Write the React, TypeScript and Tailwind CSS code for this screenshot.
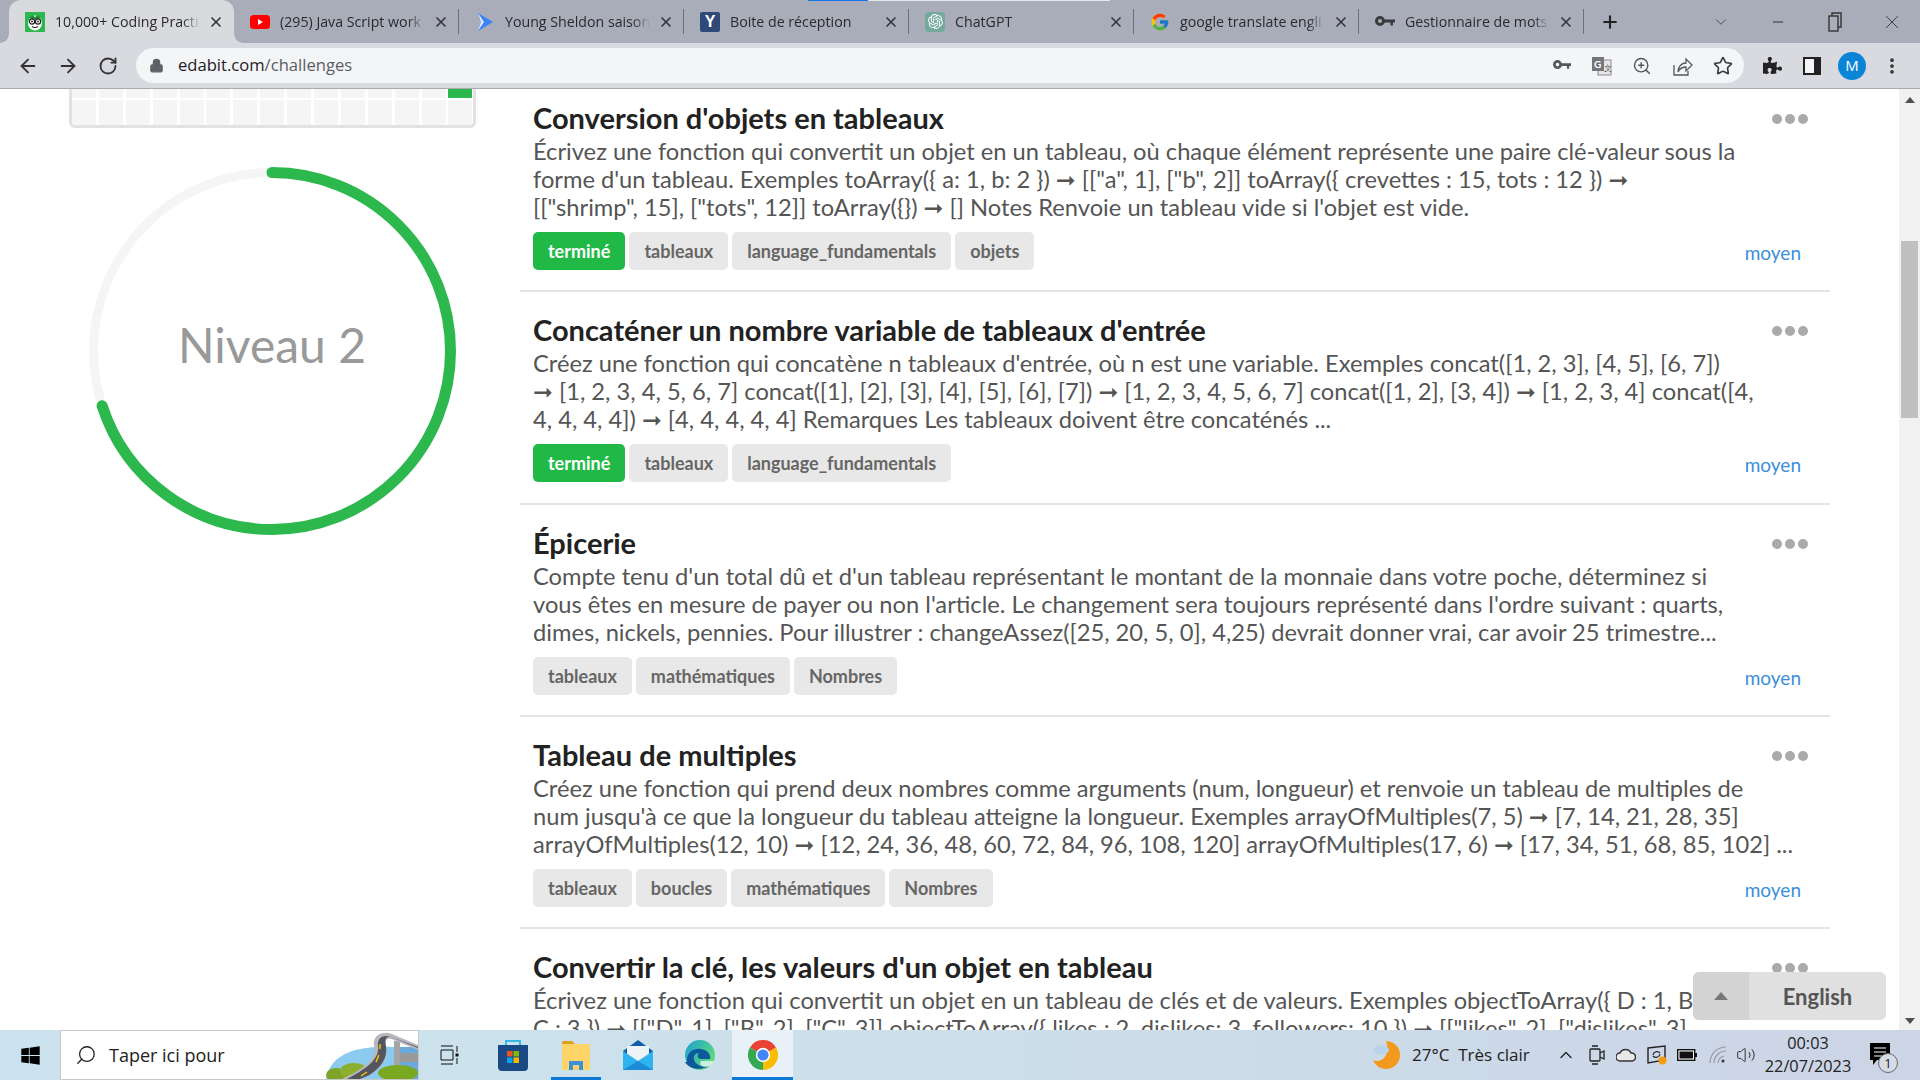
import { ArrowLeft, ArrowRight, RotateCw, Lock, X, Plus, ChevronDown, Minus, ZoomIn, Star, EllipsisVertical, ChevronUp, Search, Volume2 } from "lucide-react";
import { FaPuzzlePiece, FaWindows } from "react-icons/fa";
import { FcGoogle } from "react-icons/fc";
import { SiOpenai } from "react-icons/si";
import type { ReactNode } from "react";

function KeyIcon({ className = "" }: { className?: string }) {
  return (
    <svg viewBox="0 0 20 12" className={className} fill="currentColor">
      <path d="M5 0a5 5 0 1 1-.01 10A5 5 0 0 1 5 0zm0 3a2 2 0 1 0 0 4 2 2 0 0 0 0-4z" />
      <path d="M9 3.5h11v3h-2v3h-2.5v-3H9z" />
    </svg>
  );
}

function EdabitIcon() {
  return (
    <svg viewBox="0 0 20 20" className="w-5 h-5">
      <rect width="20" height="20" fill="#2db84d" />
      <ellipse cx="10" cy="11" rx="7" ry="7.5" fill="#fff" />
      <path d="M4 6l3-3 3 2 3-2 3 3-3 1H7z" fill="#1f8f3a" />
      <circle cx="7" cy="9.5" r="2.6" fill="#fff" stroke="#222" strokeWidth="1.2" />
      <circle cx="13" cy="9.5" r="2.6" fill="#fff" stroke="#222" strokeWidth="1.2" />
      <circle cx="7" cy="9.5" r="0.9" fill="#222" />
      <circle cx="13" cy="9.5" r="0.9" fill="#222" />
      <path d="M7 14.5q3 2 6 0" stroke="#222" strokeWidth="1.1" fill="none" />
    </svg>
  );
}

function YoutubeIcon() {
  return (
    <svg viewBox="0 0 20 14" className="w-5 h-[14px]">
      <rect width="20" height="14" rx="3.5" fill="#f00" />
      <path d="M8 4l5 3-5 3z" fill="#fff" />
    </svg>
  );
}

function PrimeIcon() {
  return (
    <svg viewBox="0 0 20 20" className="w-5 h-5">
      <path d="M3 1l15 9-15 9 3-9z" fill="#3b82f6" />
      <path d="M3 1l6 9-6 9 3-9z" fill="#dbeafe" />
    </svg>
  );
}

function YahooIcon() {
  return (
    <div className="w-5 h-5 bg-[#2f4a78] rounded-[2px] flex items-center justify-center text-white text-[16px] font-bold font-['Liberation_Sans',sans-serif]">
      Y
    </div>
  );
}

function GptIcon() {
  return (
    <div className="w-5 h-5 bg-[#74aa9c] rounded-[4px] flex items-center justify-center text-white">
      <SiOpenai size={15} />
    </div>
  );
}

const tabs: { icon: ReactNode; title: string; active?: boolean; sep?: boolean }[] = [
  { icon: <EdabitIcon />, title: "10,000+ Coding Practi", active: true },
  { icon: <YoutubeIcon />, title: "(295) Java Script work", sep: true },
  { icon: <PrimeIcon />, title: "Young Sheldon saison", sep: true },
  { icon: <YahooIcon />, title: "Boite de réception", sep: true },
  { icon: <GptIcon />, title: "ChatGPT", sep: true },
  { icon: <FcGoogle size={20} />, title: "google translate engli", sep: true },
  { icon: <KeyIcon className="w-5 h-3 text-[#3a3a3a]" />, title: "Gestionnaire de mots", sep: true },
];

function TabStrip() {
  return (
    <div className="relative h-[43px] bg-[#a8adb9] flex items-stretch pl-[9px] text-[#2a2a2e] text-[14.2px] font-['Open_Sans',sans-serif]">
      <div className="absolute top-0 left-[808px] w-[60px] h-[1px] bg-[#1a73e8]" />
      <div className="absolute top-0 left-[868px] w-[242px] h-[1px] bg-[#e4e6ea]" />
      {tabs.map((t) => (
        <div key={t.title} className={`relative w-[225px] flex items-center pl-4 pr-[10px] ${t.active ? "bg-[#d8dade] rounded-t-[12px]" : ""}`}>
          {t.active && (
            <>
              <div className="absolute bottom-0 left-[-9px] w-[9px] h-[9px] bg-[radial-gradient(circle_at_0_0,transparent_8.5px,#d8dade_9px)]" />
              <div className="absolute bottom-0 right-[-9px] w-[9px] h-[9px] bg-[radial-gradient(circle_at_100%_0,transparent_8.5px,#d8dade_9px)]" />
            </>
          )}
          <div className="w-5 h-5 shrink-0 flex items-center justify-center">{t.icon}</div>
          <div className="ml-[10px] flex-1 overflow-hidden whitespace-nowrap [mask-image:linear-gradient(to_right,black_88%,transparent)]">{t.title}</div>
          <X size={16} strokeWidth={2.5} className="shrink-0 ml-2 text-[#33353a]" />
          {t.sep && <div className="absolute right-0 top-[9px] h-[25px] w-[1px] bg-[#6d7078]" />}
        </div>
      ))}
      <div className="flex items-center ml-4">
        <Plus size={20} strokeWidth={2.5} className="text-[#222]" />
      </div>
      <div className="flex-1" />
      <div className="flex items-center text-[#333]">
        <div className="w-[57px] flex justify-center">
          <ChevronDown size={18} strokeWidth={1} />
        </div>
        <div className="w-[57px] flex justify-center">
          <Minus size={16} strokeWidth={1.5} />
        </div>
        <div className="w-[57px] flex justify-center">
          <svg viewBox="0 0 14 20" className="w-[14px] h-[20px]" fill="none" stroke="currentColor" strokeWidth="1.4">
            <rect x="1" y="4" width="9" height="15" />
            <path d="M4 4V1h9v14h-3" />
          </svg>
        </div>
        <div className="w-[57px] flex justify-center">
          <X size={22} strokeWidth={1} />
        </div>
      </div>
    </div>
  );
}

function Toolbar() {
  return (
    <div className="h-[46px] bg-[#d8dae0] border-b border-[#a9aaae] flex items-center pl-[17px] text-[#333]">
      <ArrowLeft size={22} strokeWidth={2} />
      <ArrowRight size={22} strokeWidth={2} className="ml-[18px]" />
      <RotateCw size={20} strokeWidth={2.2} className="ml-[19px]" />
      <div className="ml-[18px] w-[1608px] h-[35px] rounded-full bg-[#f4f5f7] flex items-center pl-[13px] pr-[11px]">
        <Lock size={15} fill="#5f6368" className="text-[#5f6368]" />
        <div className="ml-[14px] text-[16.6px] font-['Open_Sans',sans-serif] text-[#1f2024] flex-1">
          edabit.com<span className="text-[#5a5d63]">/challenges</span>
        </div>
        <KeyIcon className="w-[18px] h-[11px] text-[#55575c]" />
        <svg viewBox="0 0 20 20" className="w-[20px] h-[20px] ml-[21px]">
          <rect x="6" y="4" width="13" height="15" fill="#e5e5e8" stroke="#8a8c90" />
          <rect x="0" y="1" width="12" height="14" fill="#74767b" />
          <text x="2" y="12" fontSize="10" fontWeight="700" fill="#fff">G</text>
          <text x="12" y="15" fontSize="8" fill="#555">文</text>
        </svg>
        <ZoomIn size={20} strokeWidth={1.7} className="ml-[20px] text-[#55575c]" />
        <svg viewBox="0 0 20 20" className="w-[20px] h-[20px] ml-[21px] text-[#55575c]" fill="none" stroke="currentColor" strokeWidth="1.3">
          <path d="M1 9v10h14v-4" />
          <path d="M5 16c0-6 4-9 8-9V3l6 6-6 6v-4c-3 0-6 1-8 5z" />
        </svg>
        <Star size={20} strokeWidth={2} className="ml-[20px] text-[#3d3f44]" />
      </div>
      <FaPuzzlePiece size={19} className="ml-[19px] text-[#222]" />
      <svg viewBox="0 0 18 18" className="w-[18px] h-[18px] ml-[21px]">
        <rect x="1" y="1" width="16" height="16" fill="#f4f5f7" stroke="#222" strokeWidth="2" />
        <rect x="11" y="1" width="6" height="16" fill="#222" />
      </svg>
      <div className="ml-[17px] w-7 h-7 rounded-full bg-[#0a84d6] text-white text-[15px] flex items-center justify-center font-['Open_Sans',sans-serif]">
        M
      </div>
      <EllipsisVertical size={20} strokeWidth={2.5} className="ml-[16px] text-[#333]" />
    </div>
  );
}

function Sidebar() {
  return (
    <aside className="w-[520px] shrink-0 pl-[69px]">
      <div className="w-[407px] h-[39px] border-x-[3px] border-b-[3px] border-[#e2e2e2] rounded-b-[6px] flex flex-col gap-[2px] overflow-hidden">
        <div className="h-[9px] grid grid-cols-[repeat(15,24px)] gap-x-[2.9px]">
          {Array.from({ length: 15 }).map((_, i) => (
            <div key={i} className={i === 14 ? "bg-[#2db84d]" : "bg-[#f5f5f5]"} />
          ))}
        </div>
        <div className="flex-1 grid grid-cols-[repeat(15,24px)] gap-x-[2.9px]">
          {Array.from({ length: 15 }).map((_, i) => (
            <div key={i} className="bg-[#f5f5f5]" />
          ))}
        </div>
      </div>
      <div className="mt-[35px] ml-[15px] relative w-[376px] h-[376px]">
        <svg viewBox="0 0 376 376" className="w-full h-full">
          <circle cx="188" cy="188" r="178.5" fill="none" stroke="#f5f5f5" strokeWidth="9" />
          <circle
            cx="188"
            cy="188"
            r="178.5"
            fill="none"
            stroke="#2db84d"
            strokeWidth="11"
            strokeLinecap="round"
            strokeDasharray={`${2 * Math.PI * 178.5 * 0.7} ${2 * Math.PI * 178.5}`}
            transform="rotate(-90 188 188)"
          />
        </svg>
        <div className="absolute inset-0 flex items-center justify-center pb-[12px] text-[48px] text-[#999] font-['Lato',sans-serif]">Niveau 2</div>
      </div>
    </aside>
  );
}

interface Challenge {
  title: string;
  lines: string[];
  tags: string[];
  done?: boolean;
}

const challenges: Challenge[] = [
  {
    title: "Conversion d'objets en tableaux",
    lines: [
      "Écrivez une fonction qui convertit un objet en un tableau, où chaque élément représente une paire clé-valeur sous la",
      'forme d\'un tableau. Exemples toArray({ a: 1, b: 2 }) ➞ [["a", 1], ["b", 2]] toArray({ crevettes : 15, tots : 12 }) ➞',
      '[["shrimp", 15], ["tots", 12]] toArray({}) ➞ [] Notes Renvoie un tableau vide si l\'objet est vide.',
    ],
    tags: ["tableaux", "language_fundamentals", "objets"],
    done: true,
  },
  {
    title: "Concaténer un nombre variable de tableaux d'entrée",
    lines: [
      "Créez une fonction qui concatène n tableaux d'entrée, où n est une variable. Exemples concat([1, 2, 3], [4, 5], [6, 7])",
      "➞ [1, 2, 3, 4, 5, 6, 7] concat([1], [2], [3], [4], [5], [6], [7]) ➞ [1, 2, 3, 4, 5, 6, 7] concat([1, 2], [3, 4]) ➞ [1, 2, 3, 4] concat([4,",
      "4, 4, 4, 4]) ➞ [4, 4, 4, 4, 4] Remarques Les tableaux doivent être concaténés ...",
    ],
    tags: ["tableaux", "language_fundamentals"],
    done: true,
  },
  {
    title: "Épicerie",
    lines: [
      "Compte tenu d'un total dû et d'un tableau représentant le montant de la monnaie dans votre poche, déterminez si",
      "vous êtes en mesure de payer ou non l'article. Le changement sera toujours représenté dans l'ordre suivant : quarts,",
      "dimes, nickels, pennies. Pour illustrer : changeAssez([25, 20, 5, 0], 4,25) devrait donner vrai, car avoir 25 trimestre...",
    ],
    tags: ["tableaux", "mathématiques", "Nombres"],
  },
  {
    title: "Tableau de multiples",
    lines: [
      "Créez une fonction qui prend deux nombres comme arguments (num, longueur) et renvoie un tableau de multiples de",
      "num jusqu'à ce que la longueur du tableau atteigne la longueur. Exemples arrayOfMultiples(7, 5) ➞ [7, 14, 21, 28, 35]",
      "arrayOfMultiples(12, 10) ➞ [12, 24, 36, 48, 60, 72, 84, 96, 108, 120] arrayOfMultiples(17, 6) ➞ [17, 34, 51, 68, 85, 102] ...",
    ],
    tags: ["tableaux", "boucles", "mathématiques", "Nombres"],
  },
  {
    title: "Convertir la clé, les valeurs d'un objet en tableau",
    lines: [
      "Écrivez une fonction qui convertit un objet en un tableau de clés et de valeurs. Exemples objectToArray({ D : 1, B",
      'C : 3 }) ➞ [["D", 1], ["B", 2], ["C", 3]] objectToArray({ likes : 2, dislikes: 3, followers: 10 }) ➞ [["likes", 2], ["dislikes", 3]',
    ],
    tags: ["tableaux", "objets"],
  },
];

function ChallengeRow({ c }: { c: Challenge }) {
  return (
    <div className="relative h-[212.3px] shrink-0 border-b-2 border-[#e4e4e4] pl-[13px] pt-[21px]">
      <div className="absolute right-[22px] top-[34px] flex gap-[3px]">
        <span className="w-[10px] h-[10px] rounded-full bg-[#aaa]" />
        <span className="w-[10px] h-[10px] rounded-full bg-[#aaa]" />
        <span className="w-[10px] h-[10px] rounded-full bg-[#aaa]" />
      </div>
      <h3 className="text-[29px] leading-[34px] font-bold text-[#222] whitespace-nowrap">{c.title}</h3>
      <div className="mt-[2px] text-[23.7px] leading-[28px] text-[#555] whitespace-nowrap">
        {c.lines.map((l) => (
          <div key={l}>{l}</div>
        ))}
      </div>
      <div className="mt-[11px] flex items-end justify-between pr-[29px]">
        <div className="flex gap-1">
          {c.done && <span className="h-[38px] px-[15px] rounded-[5px] bg-[#20b946] text-white font-bold text-[18px] leading-[38px]">terminé</span>}
          {c.tags.map((t) => (
            <span key={t} className="h-[38px] px-[15px] rounded-[5px] bg-[#e8e8e8] text-[#666] font-bold text-[18px] leading-[38px]">
              {t}
            </span>
          ))}
        </div>
        <span className="text-[19px] leading-[28px] text-[#3b8fdb] mb-[3px]">moyen</span>
      </div>
    </div>
  );
}

function Scrollbar() {
  return (
    <div className="w-[21px] shrink-0 bg-[#f1f1f1] flex flex-col items-center">
      <div className="mt-[8px] w-0 h-0 border-x-[5px] border-x-transparent border-b-[6px] border-b-[#505050]" />
      <div className="mt-[138px] w-[17px] h-[177px] bg-[#c0c0c0]" />
      <div className="flex-1" />
      <div className="mb-[6px] w-0 h-0 border-x-[5px] border-x-transparent border-t-[6px] border-t-[#505050]" />
    </div>
  );
}

function StoreIcon() {
  return (
    <svg viewBox="0 0 30 32" className="w-[30px] h-[32px]">
      <path d="M8 6V2h14v4" fill="none" stroke="#35b8e8" strokeWidth="2" />
      <path d="M0 6h30v22a4 4 0 0 1-4 4H4a4 4 0 0 1-4-4z" fill="#1a4a86" />
      <rect x="9" y="12" width="5.5" height="5.5" fill="#f25022" />
      <rect x="15.5" y="12" width="5.5" height="5.5" fill="#7fba00" />
      <rect x="9" y="18.5" width="5.5" height="5.5" fill="#00a4ef" />
      <rect x="15.5" y="18.5" width="5.5" height="5.5" fill="#ffb900" />
    </svg>
  );
}

function FolderIcon() {
  return (
    <svg viewBox="0 0 28 30" className="w-[28px] h-[30px]">
      <path d="M0 3a2 2 0 0 1 2-2h8l3 3H0z" fill="#e0a10d" />
      <rect x="0" y="4" width="28" height="26" rx="1" fill="#fcd468" />
      <path d="M7 30v-9h14v9h-4v-5h-6v5z" fill="#3d8fd8" />
    </svg>
  );
}

function MailIcon() {
  return (
    <svg viewBox="0 0 30 30" className="w-[30px] h-[30px]">
      <path d="M0 11L15 0l15 11v19H0z" fill="#0f5fa8" />
      <path d="M4 6h22v13l-11 6-11-6z" fill="#eef3f8" />
      <path d="M0 11l15 10 15-10v19H0z" fill="#2fb4ee" />
      <path d="M0 30l15-9 15 9z" fill="#1c8cd6" />
    </svg>
  );
}

function EdgeIcon() {
  return (
    <svg viewBox="0 0 30 30" className="w-[30px] h-[30px]">
      <defs>
        <linearGradient id="edgeA" x1="0" y1="0" x2="1" y2="0.6">
          <stop offset="0" stopColor="#1a9ed8" />
          <stop offset="1" stopColor="#5fdc78" />
        </linearGradient>
      </defs>
      <circle cx="15" cy="15" r="15" fill="url(#edgeA)" />
      <path d="M2 22C1 12 9 8 16 9c7 1 10 6 9 10h-9c-4 0-4-4-2-6-6 0-7 7-2 11 3 3 9 3 13 1-5 5-20 6-25-3z" fill="#0c5a9c" />
      <path d="M16 21h13c-1 2-2 4-4 5-5 2-12 0-9-5z" fill="#cbeee0" />
    </svg>
  );
}

function ChromeIcon() {
  return (
    <svg viewBox="0 0 30 30" className="w-[30px] h-[30px]">
      <path d="M15 15L2 7.5A15 15 0 0 1 28 7.5z" fill="#ea4335" />
      <path d="M15 15L28 7.5A15 15 0 0 1 15 30z" fill="#fbbc04" />
      <path d="M15 15L15 30A15 15 0 0 1 2 7.5z" fill="#34a853" />
      <circle cx="15" cy="15" r="7.2" fill="#fff" />
      <circle cx="15" cy="15" r="5.6" fill="#4285f4" />
    </svg>
  );
}

function HighwayPic() {
  return (
    <svg viewBox="0 0 96 50" className="absolute right-0 bottom-0 w-[96px] h-[50px]">
      <path d="M4 50C8 28 28 16 72 18v32z" fill="#8ccbf0" />
      <rect x="72" y="18" width="24" height="32" fill="#6aa9dc" />
      <rect x="78" y="24" width="18" height="9" fill="#9a9a9a" />
      <rect x="72" y="12" width="6" height="34" fill="#a5a5a5" />
      <ellipse cx="14" cy="46" rx="10" ry="7" fill="#7da52a" />
      <ellipse cx="32" cy="42" rx="14" ry="8" fill="#8cb02e" />
      <ellipse cx="76" cy="44" rx="20" ry="8" fill="#7aa823" />
      <path d="M20 50C46 38 54 28 52 17c-2-10 8-16 18-12l26 11v5L72 11c-7-3-10 0-8 8 2 14-8 25-26 31z" fill="#b8b8c0" />
      <path d="M25 50C48 38 58 28 56 17c-1-9 6-12 13-9l27 11v-1L72 9c-7-3-10 0-8 8 2 14-8 27-26 33z" fill="#55555f" />
      <path d="M39 47l6-4M54 33l3-7M58 20v-5" stroke="#f6c500" strokeWidth="1.5" />
    </svg>
  );
}

function Taskbar() {
  return (
    <div className="h-[50px] shrink-0 bg-[linear-gradient(to_right,#cbe3ee,#cce0ea_45%,#ccd4e6)] flex items-stretch text-[#222] font-['Open_Sans',sans-serif]">
      <div className="w-[60px] flex items-center justify-center">
        <FaWindows size={21} className="text-black" />
      </div>
      <div className="relative w-[359px] bg-white border border-[#c8c8c8] flex items-center pl-[14px] text-[18px] overflow-hidden">
        <Search size={22} strokeWidth={1.4} className="-scale-x-100" />
        <span className="ml-[12px]">Taper ici pour</span>
        <HighwayPic />
      </div>
      <div className="w-[62px] flex items-center justify-center">
        <svg viewBox="0 0 20 20" className="w-[20px] h-[20px]" fill="none" stroke="#111" strokeWidth="1">
          <path d="M1 1h12M1 19h12M1 5h12v10H1z" />
          <path d="M17 1v6M17 13v6" />
          <rect x="15.5" y="8.5" width="3" height="3" fill="#111" stroke="none" />
        </svg>
      </div>
      <div className="w-[64px] flex items-center justify-center"><StoreIcon /></div>
      <div className="relative w-[62px] flex items-center justify-center">
        <FolderIcon />
        <div className="absolute bottom-0 inset-x-[6px] h-[3px] bg-[#0a78d4]" />
      </div>
      <div className="w-[62px] flex items-center justify-center"><MailIcon /></div>
      <div className="w-[62px] flex items-center justify-center"><EdgeIcon /></div>
      <div className="relative w-[61px] ml-[1px] bg-[#e8f1f7] flex items-center justify-center">
        <ChromeIcon />
        <div className="absolute bottom-0 inset-x-0 h-[3px] bg-[#0a78d4]" />
      </div>
      <div className="flex-1" />
      <div className="flex items-center w-[184px] text-[17px]">
        <svg viewBox="0 0 28 28" className="w-[28px] h-[28px] shrink-0">
          <path d="M14 0a14 14 0 1 1-13 19c8 4 18-4 13-19z" fill="#f39a1e" />
          <ellipse cx="9" cy="9" rx="8" ry="4.5" fill="#b8d4ec" />
        </svg>
        <span className="ml-[12px] whitespace-nowrap">27°C&nbsp; Très clair</span>
      </div>
      <div className="flex items-center text-[#222]">
        <ChevronUp size={20} strokeWidth={1.6} />
        <svg viewBox="0 0 16 20" className="ml-[13px] w-[16px] h-[20px]" fill="none" stroke="#222" strokeWidth="1.3">
          <rect x="1" y="4" width="10" height="12" rx="1" />
          <path d="M11 8l4-2v8l-4-2M3 1h6M3 19h6" />
        </svg>
        <svg viewBox="0 0 20 14" className="ml-[11px] w-[20px] h-[14px]">
          <path d="M4 13a4 4 0 0 1 0-8 6 6 0 0 1 11 0 4 4 0 0 1 1 8z" fill="#e8e8e8" stroke="#333" strokeWidth="1.5" />
        </svg>
        <svg viewBox="0 0 20 20" className="ml-[11px] w-[20px] h-[20px]">
          <path d="M1 3l17-2v14l-17 3z" fill="none" stroke="#222" strokeWidth="1.4" />
          <path d="M6 10a4 4 0 0 1 7-2M13 9a4 4 0 0 1-7 2" fill="none" stroke="#222" strokeWidth="1.2" />
          <circle cx="15.5" cy="15.5" r="4" fill="#f79a10" />
        </svg>
        <svg viewBox="0 0 20 12" className="ml-[10px] w-[20px] h-[12px]">
          <rect x="0.7" y="0.7" width="17" height="10.6" fill="#fff" stroke="#111" strokeWidth="1.4" />
          <rect x="2.5" y="2.5" width="13.5" height="7" fill="#111" />
          <rect x="18" y="4" width="2" height="4" fill="#111" />
        </svg>
        <svg viewBox="0 0 18 18" className="ml-[12px] w-[18px] h-[18px]" fill="none" stroke="#9a9a9a" strokeWidth="1.2">
          <path d="M1 17A16 16 0 0 1 17 1M5 17A12 12 0 0 1 17 5M9 17a8 8 0 0 1 6-7" />
          <circle cx="14" cy="15" r="1.5" fill="#333" stroke="none" />
        </svg>
        <Volume2 size={20} strokeWidth={1.1} className="ml-[9px]" />
      </div>
      <div className="ml-[6px] w-[92px] flex flex-col items-center justify-center text-[16.3px] leading-[23px] text-[#222]">
        <span>00:03</span>
        <span className="whitespace-nowrap">22/07/2023</span>
      </div>
      <div className="relative w-[50px] ml-[16px]">
        <svg viewBox="0 0 20 24" className="absolute left-0 top-[13px] w-[20px] h-[24px]">
          <path d="M0 0h20v17H7l-4 5v-5H0z" fill="#000" />
          <path d="M4 5h12M4 9h12M4 13h12" stroke="#fff" strokeWidth="1.2" />
        </svg>
        <span className="absolute left-[8px] top-[23px] w-[20px] h-[20px] rounded-full bg-[#d6dbe6] border border-[#666] text-[13px] leading-[18px] text-center">1</span>
      </div>
    </div>
  );
}

export default function App() {
  return (
    <div className="w-[1920px] h-[1080px] flex flex-col overflow-hidden bg-white font-['Lato',sans-serif]">
      <TabStrip />
      <Toolbar />
      <main className="relative flex-1 min-h-0 flex overflow-hidden">
        <Sidebar />
        <div className="w-[1310px] shrink-0 -mt-[9px] font-['Lato','DejaVu_Sans',sans-serif]">
          {challenges.map((c) => (
            <ChallengeRow key={c.title} c={c} />
          ))}
        </div>
        <div className="flex-1" />
        <Scrollbar />
        <div className="absolute left-[1693px] bottom-[10px] w-[193px] h-[48px] rounded-[6px] overflow-hidden flex bg-[#e0e0e0]">
          <div className="w-[56px] bg-[#d3d3d3] flex items-center justify-center">
            <div className="w-0 h-0 border-x-[7px] border-x-transparent border-b-[8px] border-b-[#777]" />
          </div>
          <div className="flex-1 flex items-center justify-center text-[22px] font-bold text-[#555]">English</div>
        </div>
      </main>
      <Taskbar />
    </div>
  );
}
